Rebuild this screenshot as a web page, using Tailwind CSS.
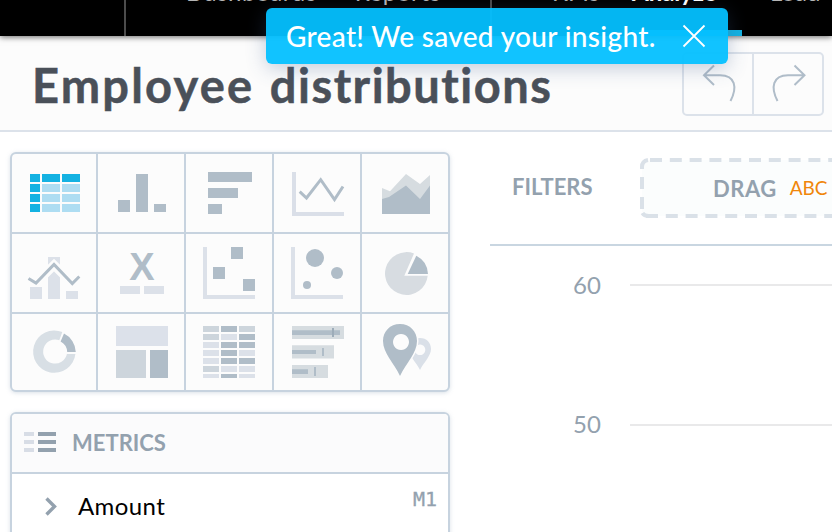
<!DOCTYPE html>
<html lang="en">
<head>
<meta charset="utf-8">
<title>Employee distributions</title>
<script src="https://cdn.jsdelivr.net/npm/@tailwindcss/browser@4"></script>
</head>
<body class="relative w-[832px] h-[532px] overflow-hidden bg-white font-['Lato',sans-serif] text-[#93a1ae]">

<nav class="relative z-10 flex h-[36px] bg-black shadow-[0_1px_6px_rgba(0,0,0,0.6)] overflow-visible text-[24px] leading-[28px] text-[#b5b5b5] whitespace-nowrap">
  <div class="w-[126px] shrink-0 border-r-2 border-[#4c4c4c]"></div>
  <div class="flex w-[366px] shrink-0 h-[36px] overflow-hidden border-r-2 border-[#4c4c4c] pl-[60px] gap-[38px] tracking-[0.6px]">
    <span class="-mt-[22px]">Dashboards</span><span class="-mt-[22px]">Reports</span>
  </div>
  <div class="flex w-[340px] shrink-0 h-[36px] overflow-hidden pl-[60px] gap-[28px]">
    <span class="-mt-[22px] w-[52px]">KPIs</span>
    <span class="h-[36px] w-[110px] border-b-[6px] border-[#14b2e2] font-bold text-white"><span class="block -mt-[22px]">Analyze</span></span>
    <span class="-mt-[22px]">Load</span>
  </div>
</nav>

<header class="flex h-[96px] items-start justify-between bg-[#fcfcfc] border-b-2 border-[#dce2ea] pl-[32px] pr-[8px]">
  <h1 class="mt-[21px] text-[47px] leading-[56px] font-bold tracking-[1.82px] text-[#4a5059] whitespace-nowrap [font-variant-ligatures:none] [-webkit-text-stroke:0.5px_#4a5059]"><span class="tracking-[2.2px]">Employee </span><span class="ml-[2px] tracking-[1.500px]">distributions</span></h1>
  <div class="mt-[16px] flex h-[64px] w-[142px] shrink-0 rounded-[5px] border-2 border-[#dce2ea]">
    <button class="w-[70px] border-r-2 border-[#dce2ea]" aria-label="Undo">
      <svg class="block" width="68" height="60" viewBox="684 54 68 60" fill="none" stroke="#b0bdc9" stroke-width="2"><path d="M714 65.5 L704 75.3 L714 85 M704 75.3 H720 C735.500 75.500 737.500 87.500 730.500 101"/></svg>
    </button>
    <button class="w-[68px]" aria-label="Redo">
      <svg class="block" width="68" height="60" viewBox="754 54 68 60" fill="none" stroke="#b0bdc9" stroke-width="2"><path d="M794.500 65.500 L804.500 75.300 L794.500 85 M804.500 75.300 H788 C772.500 75.500 770.500 87.500 777.500 101"/></svg>
    </button>
  </div>
</header>

<main class="flex gap-[40px] pl-[10px]">
  <aside class="flex w-[440px] shrink-0 flex-col gap-[20px] pt-[20px]">
    <section class="grid h-[240px] grid-cols-[84px_86px_86px_86px_86px] grid-rows-[78px_78px_76px] gap-[2px] overflow-hidden rounded-[6px] border-2 border-[#c7d3df] bg-[#c7d3df] shadow-[0_1px_4px_rgba(150,170,190,0.35)]">
      <div class="bg-[#fcfcfc]"><svg class="block" width="84" height="78" viewBox="12 154 84 78"><path fill="#14b2e2" d="M30 174h10v8h-10zM42 174h18v8h-18zM62 174h18v8h-18zM30 184h10v8h-10zM30 194h10v8h-10zM30 204h10v8h-10z"/><path fill="#aeddf2" d="M42 184h18v8h-18zM62 184h18v8h-18zM42 194h18v8h-18zM62 194h18v8h-18zM42 204h18v8h-18zM62 204h18v8h-18z"/></svg></div>
      <div class="bg-[#fcfcfc]"><svg class="block" width="86" height="78" viewBox="98 154 86 78"><path fill="#b0bdc8" d="M118 200h12v12h-12zM136 174h12v38h-12zM154 204h12v8h-12z"/></svg></div>
      <div class="bg-[#fcfcfc]"><svg class="block" width="86" height="78" viewBox="186 154 86 78"><path fill="#b0bdc8" d="M208 172h44v10h-44zM208 188h30v10h-30zM208 204h14v10h-14z"/></svg></div>
      <div class="bg-[#fcfcfc]"><svg class="block" width="86" height="78" viewBox="274 154 86 78"><path fill="#dadfe8" d="M292 172h4v40h48v4h-52z"/><path fill="none" stroke="#b0bdc8" stroke-width="3" d="M299.700 191.700L306.500 198L320.700 179.700L334.500 199.500L343 186.500"/></svg></div>
      <div class="bg-[#fcfcfc]"><svg class="block" width="86" height="78" viewBox="362 154 86 78"><path fill="#d6dce0" d="M382 188L390 191.300L406 174L420 184L430 175V214H382z"/><path fill="#b0bdc8" d="M382 199L389 197L406 185.500L420 199L430 185.500V214H382z"/></svg></div>

      <div class="bg-[#fcfcfc]"><svg class="block" width="84" height="78" viewBox="12 234 84 78"><path fill="#dce1e9" d="M30 287h12v12h-12zM48 257h12v42h-12zM66 291h12v8h-12z"/><path fill="none" stroke="#fcfcfc" stroke-width="9" d="M44 275L54 265L64 275"/><path fill="none" stroke="#b0bdc8" stroke-width="3" d="M28.500 278.500L36 283L54 264.500L72.300 283.500L79.300 276.500"/></svg></div>
      <div class="flex flex-col items-center bg-[#fcfcfc]"><span class="mt-[15px] ml-[2px] h-[37px] font-['Liberation_Sans',sans-serif] text-[38px] leading-[37px] font-bold text-[#b0bdc8]">X</span><span class="flex gap-[4px] pl-[2px]"><i class="h-[8px] w-[20px] bg-[#dce1e9]"></i><i class="h-[8px] w-[20px] bg-[#dce1e9]"></i></span></div>
      <div class="bg-[#fcfcfc]"><svg class="block" width="86" height="78" viewBox="186 234 86 78"><path fill="#dce1e9" d="M203 247h4v48h48v4h-52z"/><path fill="#b0bdc8" d="M231 247h12v12h-12zM213 267h12v12h-12zM243 279h12v12h-12z"/></svg></div>
      <div class="bg-[#fcfcfc]"><svg class="block" width="86" height="78" viewBox="274 234 86 78"><path fill="#dce1e9" d="M291 247h4v48h48v4h-52z"/><g fill="#b0bdc8"><circle cx="315" cy="258" r="9"/><circle cx="337" cy="273" r="6"/><circle cx="307" cy="285" r="4"/></g></svg></div>
      <div class="bg-[#fcfcfc]"><svg class="block" width="86" height="78" viewBox="362 234 86 78"><path fill="#d7dce1" d="M404.300 275.800L414 253.500A21.400 21.400 0 1 0 427.700 275.800z"/><path fill="#b0bdc8" d="M407.700 274L416.300 255.700A21.400 21.400 0 0 1 428 274z"/></svg></div>

      <div class="bg-[#fcfcfc]"><svg class="block" width="84" height="76" viewBox="12 314 84 76"><path fill="#d8dfe5" d="M62.300 332A21.200 21.200 0 1 0 75.400 354H66.900A12 12 0 1 1 59.300 340.300z"/><path fill="#b0bdc8" d="M64 333.600A21.200 21.200 0 0 1 75.800 352H67.200A12.500 12.500 0 0 0 60.600 341.500z"/></svg></div>
      <div class="bg-[#fcfcfc]"><svg class="block" width="86" height="76" viewBox="98 314 86 76"><path fill="#dce1ea" d="M116 326h52v20h-52z"/><path fill="#cdd5dc" d="M116 350h30v28h-30z"/><path fill="#b0bdc8" d="M150 350h18v28h-18z"/></svg></div>
      <div class="bg-[#fcfcfc]"><svg class="block" width="86" height="76" viewBox="186 314 86 76"><path fill="#dce1e9" d="M221 334h16v6h-16zM203 342h16v6h-16zM203 350h16v6h-16zM239 350h16v6h-16zM203 358h16v6h-16zM221 366h16v6h-16zM239 366h16v6h-16zM203 374h16v4h-16zM239 374h16v4h-16z"/><path fill="#cdd5dc" d="M203 326h16v6h-16zM239 326h16v6h-16zM203 334h16v6h-16zM203 366h16v6h-16z"/><path fill="#b0bdc8" d="M221 326h16v6h-16zM239 334h16v6h-16zM221 342h16v6h-16zM239 342h16v6h-16zM221 350h16v6h-16zM221 358h16v6h-16zM239 358h16v6h-16zM221 374h16v4h-16z"/></svg></div>
      <div class="bg-[#fcfcfc]"><svg class="block" width="86" height="76" viewBox="274 314 86 76"><path fill="#d6dce0" d="M292 326h52v13h-52zM292 345.300h42v13.200h-42zM292 365h36v13h-36z"/><path fill="#b0bdc8" d="M292 330.300h48v4.700h-48zM292 350h24v4h-24zM292 369.300h16v4.700h-16zM322 348h2v8h-2zM314 367h2v9h-2z"/><path fill="#9dacb9" d="M332 328h2v9h-2z"/></svg></div>
      <div class="bg-[#fcfcfc]"><svg class="block" width="86" height="76" viewBox="362 314 86 76"><path fill="#dae0e8" fill-rule="evenodd" d="M420 338C426.500 338 431 342.500 431 349C431 356 424 362 420 370C416 362 409 356 409 349C409 342.500 413.500 338 420 338zM420 344.500a5.300 5.300 0 1 0 .01 0z"/><path fill="#b0bdc8" stroke="#fcfcfc" stroke-width="3" paint-order="stroke" fill-rule="evenodd" d="M400 324C410 324 417 331.500 417 341C417 353 406 363 400 376C394 363 383 353 383 341C383 331.500 390 324 400 324zM401 334a8 8 0 1 0 .01 0z"/></svg></div>
    </section>

    <section class="h-[140px] rounded-t-[6px] border-2 border-[#c7d3df] bg-white shadow-[0_1px_4px_rgba(150,170,190,0.35)]">
      <div class="flex h-[60px] items-center rounded-t-[4px] border-b-2 border-[#c7d3df] bg-[#fbfbfc] pl-[12px] pb-[2px]">
        <svg width="32" height="20" viewBox="24 432 32 20"><path fill="#d8dde6" d="M24 432h10v4h-10zM24 440h10v4h-10zM24 448h10v4h-10z"/><path fill="#93a1ae" d="M38 432h18v4h-18zM38 440h18v4h-18zM38 448h18v4h-18z"/></svg>
        <h2 class="ml-[16px] pt-[2px] text-[22px] leading-[28px] font-bold">METRICS</h2>
      </div>
      <div class="flex h-[64px] items-center pl-[32px] pr-[11px]">
        <svg width="14" height="20" viewBox="0 0 14 20" fill="none" stroke="#93a1ae" stroke-width="3.400"><path d="M2.500 2.500L10.500 10.500L2.500 18.500"/></svg>
        <span class="ml-[20px] text-[24px] leading-[28px] tracking-[0.4px] text-black">Amount</span>
        <span class="ml-auto -mt-[15px] font-['DejaVu_Sans_Mono',monospace] text-[20px] leading-[24px] [-webkit-text-stroke:0.3px_#93a1ae]">M1</span>
      </div>
    </section>
  </aside>

  <section class="w-[342px] shrink-0">
    <div class="flex h-[114px] border-b-2 border-[#c9d6e1] pt-[26px]">
      <h2 class="mt-[15px] w-[150px] shrink-0 pl-[22px] text-[22px] leading-[28px] font-bold">FILTERS</h2>
      <div class="relative h-[60px] w-[192px]">
        <svg class="absolute inset-0" width="192" height="60" viewBox="640 158 192 60" fill="none"><rect x="642" y="160" width="240" height="56" rx="6" fill="#fbfdfd"/><path stroke="#dae1e8" stroke-width="4" stroke-dasharray="12 7.800" d="M650 160H840M646 216H840"/><path stroke="#dae1e8" stroke-width="4" d="M642 169V167Q642 161 648 160M642 177V189M642 197V209M642.500 213Q644 216 649 216"/></svg>
        <div class="relative flex pl-[73px] pt-[17px]"><span class="text-[22px] leading-[28px] font-bold tracking-[0.5px]">DRAG</span><span class="ml-[13px] text-[19px] leading-[25px] text-[#f0860a]">ABC</span></div>
      </div>
    </div>
    <div class="flex h-[78px] items-center"><span class="w-[140px] shrink-0 pl-[83px] text-[24px]">60</span><i class="h-[2px] flex-1 bg-[#e9e9ea]"></i></div>
    <div class="mt-[62px] flex h-[78px] items-center"><span class="w-[140px] shrink-0 pl-[83px] pb-[2px] text-[24px]">50</span><i class="h-[2px] flex-1 bg-[#e9e9ea]"></i></div>
  </section>
</main>

<div class="absolute left-[266px] top-[8px] z-20 flex h-[56px] w-[462px] items-center justify-between rounded-[6px] bg-[#04c0ff]/95 pl-[20px] pr-[22px] text-white shadow-[0_4px_20px_rgba(60,90,140,0.3)]" role="status">
  <span class="text-[28px] leading-[34px] font-medium tracking-[0.33px] whitespace-nowrap">Great! We saved your insight.</span>
  <svg width="24" height="24" viewBox="0 0 24 24" stroke="#fff" stroke-width="1.800"><path d="M1.500 1.500L22.500 22.500M22.500 1.500L1.500 22.500"/></svg>
</div>
</body>
</html>
